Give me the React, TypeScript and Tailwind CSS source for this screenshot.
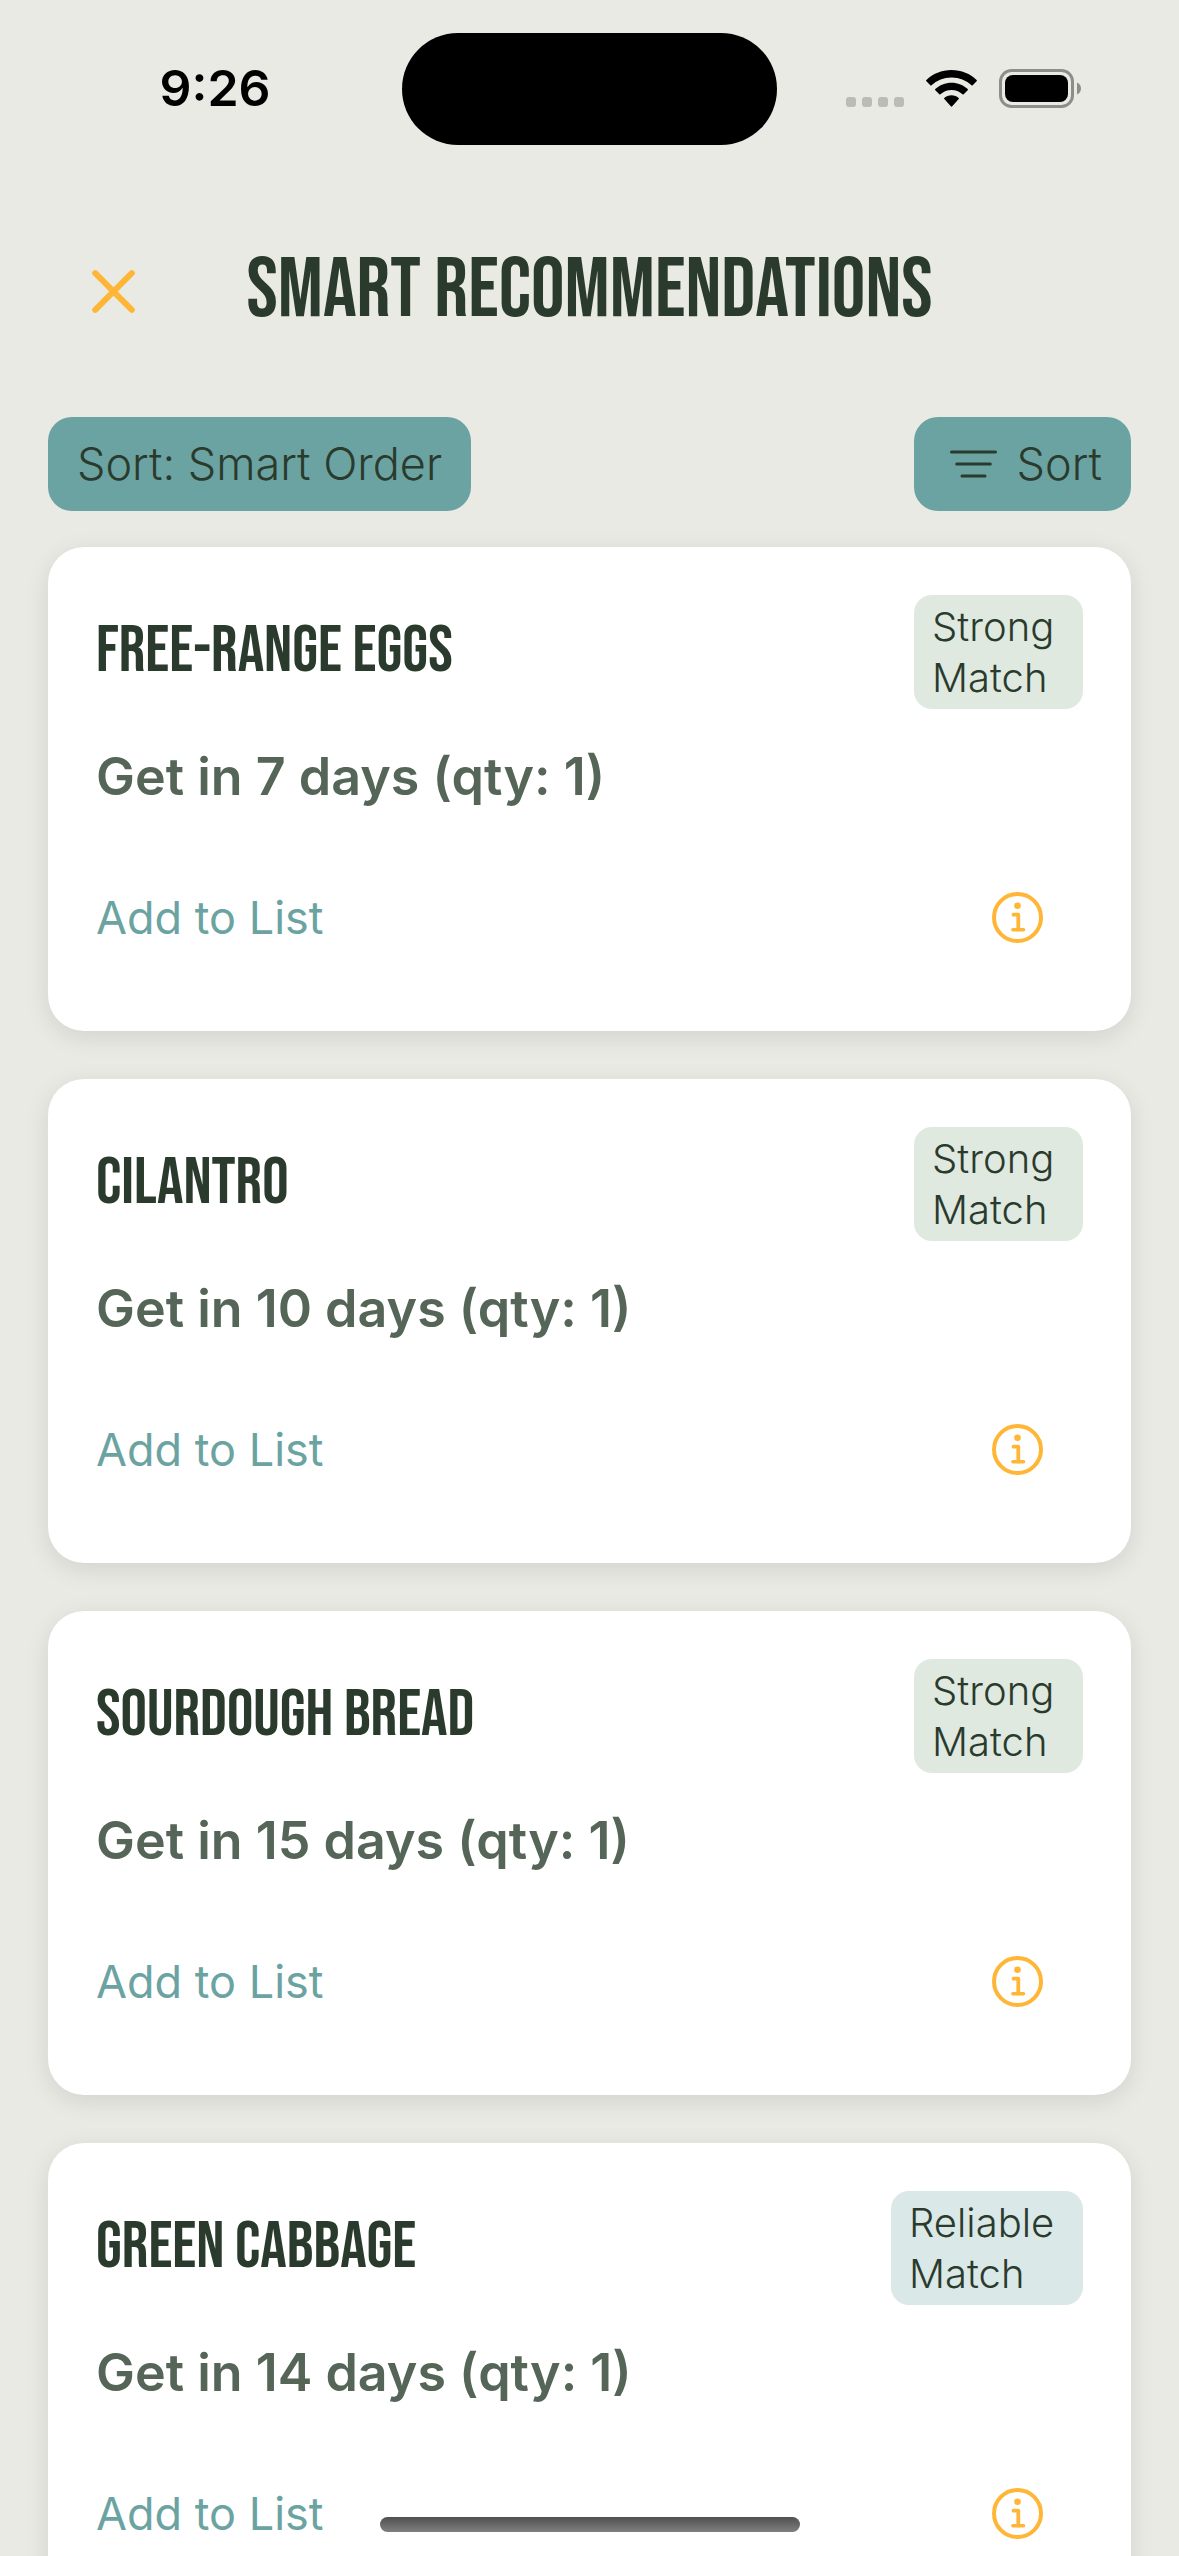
import React from "react";

type Match = "Strong" | "Reliable";

interface Recommendation {
  name: string;
  days: number;
  qty: number;
  match: Match;
}

const recommendations: Recommendation[] = [
  { name: "Free-Range Eggs", days: 7, qty: 1, match: "Strong" },
  { name: "Cilantro", days: 10, qty: 1, match: "Strong" },
  { name: "Sourdough Bread", days: 15, qty: 1, match: "Strong" },
  { name: "Green Cabbage", days: 14, qty: 1, match: "Reliable" },
];

const badgeStyles: Record<Match, string> = {
  Strong: "w-[169px] bg-[#dfe9e0]",
  Reliable: "w-48 bg-[#dae8e7]",
};

function WifiIcon() {
  return (
    <svg width="51" height="37" viewBox="0 0 51 37" fill="#000" aria-hidden="true">
      <path d="M25.5 0C35.3 0 44.3 3.8 50.6 10a.8.8 0 0 1 0 1.200L46.700 15.300a.9.9 0 0 1-1.200 0A29 29 0 0 0 25.500 7.500 29 29 0 0 0 5.500 15.300a.9.9 0 0 1-1.200 0L.4 11.200a.8.8 0 0 1 0-1.200C6.700 3.800 15.700 0 25.500 0Z" />
      <path d="M25.500 12.800c6.200 0 12 2.400 16.200 6.300.4.400.4.900 0 1.200L37.700 24.300a.9.9 0 0 1-1.200 0 16.300 16.300 0 0 0-22 0 .9.9 0 0 1-1.200 0L9.300 20.300a.8.8 0 0 1 0-1.200c4.200-3.900 10-6.300 16.200-6.300Z" />
      <path d="M25.500 25.200c2.700 0 5.200 1 7.200 2.700.4.300.4.900 0 1.200L26.200 36.300a1 1 0 0 1-1.400 0L18.300 29.100a.8.8 0 0 1 0-1.200c2-1.700 4.500-2.700 7.200-2.700Z" />
    </svg>
  );
}

function BatteryIcon() {
  return (
    <svg width="82" height="39" viewBox="0 0 82 39" aria-hidden="true">
      <rect x="1.500" y="1.500" width="72" height="36" rx="11" fill="none" stroke="#8d8e8a" strokeWidth="3" />
      <rect x="6" y="6" width="63" height="27" rx="8" fill="#000" />
      <path d="M78 13.500c2.400 1 4 3.200 4 6s-1.600 5-4 6Z" fill="#8d8e8a" />
    </svg>
  );
}

function StatusBar() {
  return (
    <div className="grid h-[177px] shrink-0 grid-cols-[1fr_375px_1fr] items-start pt-[33px]">
      <div className="flex h-[111px] items-center justify-center pl-7 text-[50px] font-semibold text-black">
        9:26
      </div>
      <div className="h-28 rounded-full bg-black" />
      <div className="flex h-[111px] items-center justify-end gap-[22px] pr-[98px]">
        <div className="flex h-[37px] items-end gap-1.5">
          {[0, 1, 2, 3].map((dot) => (
            <span key={dot} className="size-2.5 rounded-[3px] bg-[#bbbcb8]" />
          ))}
        </div>
        <WifiIcon />
        <BatteryIcon />
      </div>
    </div>
  );
}

function InfoIcon() {
  return (
    <svg width="51" height="51" viewBox="0 0 51 51" fill="none" stroke="#ffb636" aria-hidden="true">
      <circle cx="25.500" cy="25.500" r="23.500" strokeWidth="4" />
      <circle cx="25.500" cy="13.700" r="3.300" fill="#ffb636" stroke="none" />
      <path d="M21.500 22.700H26.300V37.500" strokeWidth="3.800" strokeLinecap="round" strokeLinejoin="round" />
      <path d="M20.800 37.700H31.600" strokeWidth="3.400" strokeLinecap="round" />
    </svg>
  );
}

function Card({ item }: { item: Recommendation }) {
  return (
    <li className="rounded-[36px] bg-white p-12 shadow-[0_6px_24px_rgba(0,0,0,0.1)]">
      <div className="flex items-center justify-between">
        <h2 className="font-['Bebas_Neue','Liberation_Sans_Narrow','Liberation_Sans',sans-serif] text-[66px] leading-[80px] font-normal text-[#2a3b2e] uppercase">
          {item.name}
        </h2>
        <span className={`rounded-[18px] px-[18px] py-1.5 text-[40px] leading-[51px] font-light text-[#2a3b2e] ${badgeStyles[item.match]}`}>
          <span className="block">{item.match}</span>
          <span className="block">Match</span>
        </span>
      </div>
      <p className="mt-9 text-[52px] leading-[64px] font-semibold text-[#556558]">
        Get in {item.days} days (qty: {item.qty})
      </p>
      <div className="mt-[43px] flex h-[131px] items-center justify-between">
        <button type="button" className="text-[45px] leading-[58px] text-[#6ba3a2]">
          Add to List
        </button>
        <button type="button" aria-label={`About ${item.name}`} className="p-10">
          <InfoIcon />
        </button>
      </div>
    </li>
  );
}

export default function App() {
  return (
    <div className="relative flex h-screen flex-col overflow-hidden bg-[#e9eae4] font-[Inter,sans-serif]">
      <StatusBar />
      <header className="grid h-[228px] shrink-0 grid-cols-[1fr_auto_1fr] items-center px-12">
        <button type="button" aria-label="Close" className="justify-self-start p-11">
          <svg width="43" height="43" viewBox="0 0 43 43" stroke="#ffb636" strokeWidth="6" strokeLinecap="round" aria-hidden="true">
            <path d="M3.200 3.200 39.800 39.800M39.800 3.200 3.200 39.800" />
          </svg>
        </button>
        <h1 className="font-['Bebas_Neue','Liberation_Sans_Narrow','Liberation_Sans',sans-serif] text-[84px] leading-[100px] font-normal whitespace-nowrap text-[#2a3b2e] uppercase">
          Smart Recommendations
        </h1>
      </header>
      <div className="mt-3 flex shrink-0 items-center justify-between px-12 text-[45px] leading-[58px] font-light text-[#2a3b2e]">
        <div className="rounded-3xl bg-[#6ba3a2] px-[29px] py-[18px]">Sort: Smart Order</div>
        <button type="button" className="flex items-center gap-5 rounded-3xl bg-[#6ba3a2] py-[18px] pr-[29px] pl-9">
          <svg width="47" height="28" viewBox="0 0 47 28" stroke="#2a3b2e" strokeWidth="3" strokeLinecap="round" aria-hidden="true">
            <path d="M1.500 2H45.500M6.700 14H40.300M12 26H35" />
          </svg>
          Sort
        </button>
      </div>
      <ul className="flex min-h-0 flex-1 flex-col gap-12 overflow-y-auto px-12 pt-9 [scrollbar-width:none] *:shrink-0">
        {recommendations.map((item) => (
          <Card key={item.name} item={item} />
        ))}
      </ul>
      <div className="absolute bottom-6 left-1/2 h-[15px] w-[420px] -translate-x-1/2 rounded-full bg-linear-to-b from-[#505050] to-[#808080]" />
    </div>
  );
}
